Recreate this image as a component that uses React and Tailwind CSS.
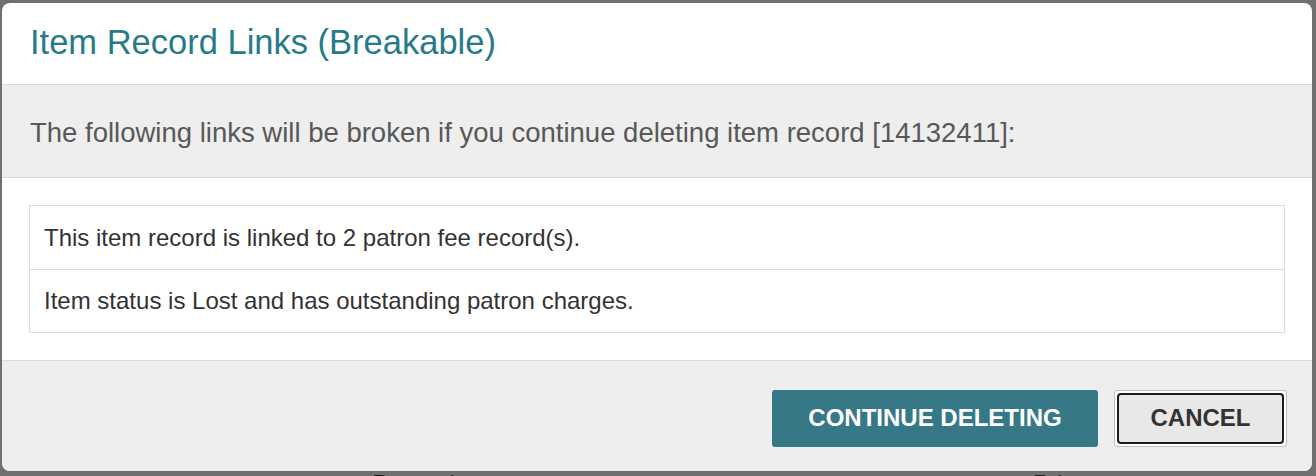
import React from 'react';

const links = [
  'This item record is linked to 2 patron fee record(s).',
  'Item status is Lost and has outstanding patron charges.',
];

const BreakableLinksDialog = ({ recordId, items }) => {
  return (
    <div className="w-[1310px] h-[468px] bg-white rounded-[8px] overflow-hidden flex flex-col">
      {/* Header */}
      <div className="h-[81px] shrink-0 flex items-center px-[28px] pb-[2px]">
        <h2 className="text-[34.5px] leading-none text-[#287a8b]">
          Item Record Links (Breakable)
        </h2>
      </div>

      {/* Notice */}
      <div className="h-[94px] shrink-0 flex items-center px-[28px] bg-[#eeeeee] border-y border-[#dadada]">
        <p className="text-[27.5px] leading-none text-[#585858] pt-[4px]">
          The following links will be broken if you continue deleting item record [{recordId}]:
        </p>
      </div>

      {/* Links list */}
      <div className="shrink-0 px-[27px] pt-[27px] pb-[27px]">
        <div className="border border-[#dcdcdc]">
          {items.map((text, i) => (
            <div
              key={i}
              className={`h-[63px] flex items-center px-[14px] text-[24px] text-[#333333] ${
                i > 0 ? 'border-t border-[#dcdcdc]' : ''
              }`}
            >
              {text}
            </div>
          ))}
        </div>
      </div>

      {/* Footer */}
      <div className="flex-1 flex items-center justify-end gap-[16px] pr-[25px] pt-[4px] bg-[#eeeeee] border-t border-[#dadada]">
        <button className="w-[326px] h-[57px] bg-[#377887] rounded-[3px] text-white font-bold text-[24px]">
          CONTINUE DELETING
        </button>
        <button className="w-[173px] h-[57px] p-[2px] bg-white border border-[#bdbdbd] rounded-[3px]">
          <span className="w-full h-full flex items-center justify-center bg-[#e8e8e8] border-2 border-[#1c1c1c] rounded-[4px] text-[#333333] font-bold text-[24px]">
            CANCEL
          </span>
        </button>
      </div>
    </div>
  );
};

export default function App() {
  return (
    <div
      className="relative w-[1316px] h-[476px] overflow-hidden bg-[#707070]"
      style={{ fontFamily: '"Liberation Sans", Arial, sans-serif' }}
    >
      {/* page content behind the overlay */}
      <div className="absolute left-[372px] top-[466px] text-[24px] text-[#1a1a1a]">Parent item:</div>
      <div className="absolute left-[1033px] top-[466px] text-[24px] text-[#1a1a1a]">Price:</div>

      <div className="absolute left-[2px] top-[3px]">
        <BreakableLinksDialog recordId="14132411" items={links} />
      </div>
    </div>
  );
}
